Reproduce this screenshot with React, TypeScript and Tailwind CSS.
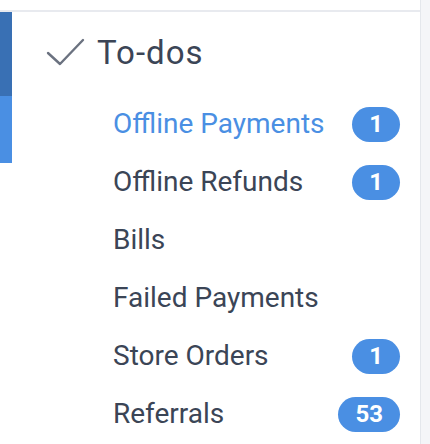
import React from "react";

const items: { label: string; active?: boolean; badge?: string }[] = [
  { label: "Offline Payments", active: true, badge: "1" },
  { label: "Offline Refunds", badge: "1" },
  { label: "Bills" },
  { label: "Failed Payments" },
  { label: "Store Orders", badge: "1" },
  { label: "Referrals", badge: "53" },
];

export default function App() {
  return (
    <div
      className="flex h-[444px] w-[430px] bg-[#f4f5f8]"
      style={{ fontFamily: "Roboto, 'Noto Sans', sans-serif" }}
    >
      <div className="flex w-[421px] flex-col border-r border-[#e4e7ec] bg-white">
        <div className="h-[10px] shrink-0" />
        <div className="flex flex-1 border-t-2 border-[#e8eaef]">
          <div className="flex w-[12px] shrink-0 flex-col">
            <div className="h-[84px] bg-[#3970b4]" />
            <div className="h-[67px] bg-[#4a8fe3]" />
          </div>
          <div className="flex flex-1 flex-col pr-[20px] pt-[20px]">
            <div className="flex h-[40px] items-center">
              <svg
                width="40"
                height="30"
                viewBox="0 0 40 30"
                className="ml-[34px] shrink-0"
              >
                <polyline
                  points="2,16 14,27 37,3"
                  fill="none"
                  stroke="#6b7280"
                  strokeWidth="2.4"
                  strokeLinecap="round"
                  strokeLinejoin="round"
                />
              </svg>
              <span className="ml-[11px] text-[33px] leading-none tracking-[1px] text-[#3b4556]">
                To-dos
              </span>
            </div>
            <div className="mt-[23px] flex flex-col pl-[101px]">
              {items.map((it) => (
                <div key={it.label} className="flex h-[58px] items-center justify-between">
                  <span
                    className={
                      "text-[28px] leading-none " +
                      (it.active ? "text-[#4a8fe3]" : "text-[#3b4556]")
                    }
                  >
                    {it.label}
                  </span>
                  {it.badge && (
                    <span className="flex h-[35px] items-center justify-center rounded-full bg-[#4a8fe3] px-[17px] text-[24px] font-bold leading-none text-white">
                      {it.badge}
                    </span>
                  )}
                </div>
              ))}
            </div>
          </div>
        </div>
      </div>
    </div>
  );
}
